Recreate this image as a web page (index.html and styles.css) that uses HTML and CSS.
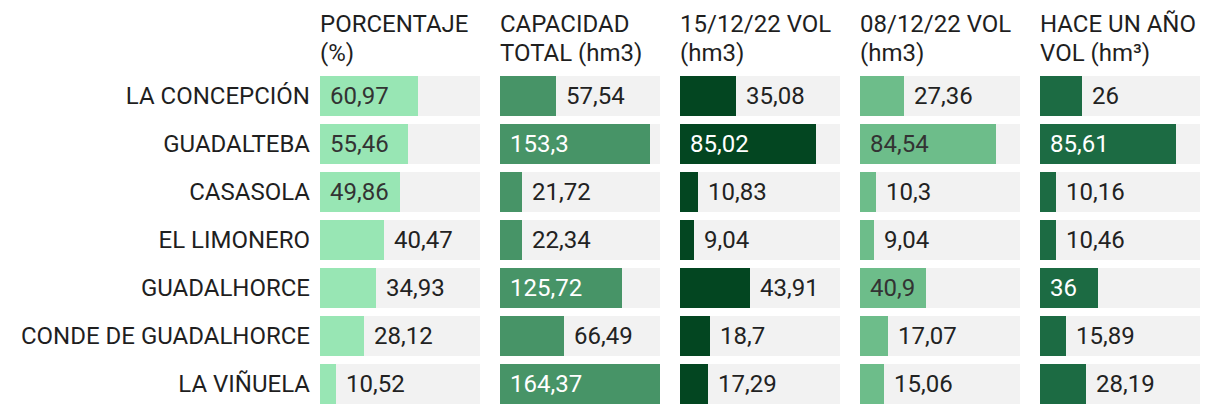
FILE: index.html
```html
<!DOCTYPE html>
<html lang="es">
<head>
<meta charset="utf-8">
<title>Embalses</title>
<link rel="stylesheet" href="styles.css">
</head>
<body>
<div class="table">
  <div class="head"></div>
  <div class="head">PORCENTAJE<br>(%)</div>
  <div class="head">CAPACIDAD<br>TOTAL (hm3)</div>
  <div class="head">15/12/22 VOL<br>(hm3)</div>
  <div class="head">08/12/22 VOL<br>(hm3)</div>
  <div class="head">HACE UN AÑO<br>VOL (hm³)</div>

  <div class="label">LA CONCEPCIÓN</div>
  <div class="cell c1"><div class="bar" style="width:98px"><span class="val">60,97</span></div></div>
  <div class="cell c2"><div class="bar" style="width:56px"></div><span class="val">57,54</span></div>
  <div class="cell c3"><div class="bar" style="width:56px"></div><span class="val">35,08</span></div>
  <div class="cell c4"><div class="bar" style="width:44px"></div><span class="val">27,36</span></div>
  <div class="cell c5"><div class="bar" style="width:42px"></div><span class="val">26</span></div>

  <div class="label">GUADALTEBA</div>
  <div class="cell c1"><div class="bar" style="width:88px"><span class="val">55,46</span></div></div>
  <div class="cell c2"><div class="bar" style="width:150px"><span class="val">153,3</span></div></div>
  <div class="cell c3"><div class="bar" style="width:136px"><span class="val">85,02</span></div></div>
  <div class="cell c4"><div class="bar" style="width:136px"><span class="val">84,54</span></div></div>
  <div class="cell c5"><div class="bar" style="width:136px"><span class="val">85,61</span></div></div>

  <div class="label">CASASOLA</div>
  <div class="cell c1"><div class="bar" style="width:80px"><span class="val">49,86</span></div></div>
  <div class="cell c2"><div class="bar" style="width:22px"></div><span class="val">21,72</span></div>
  <div class="cell c3"><div class="bar" style="width:18px"></div><span class="val">10,83</span></div>
  <div class="cell c4"><div class="bar" style="width:16px"></div><span class="val">10,3</span></div>
  <div class="cell c5"><div class="bar" style="width:16px"></div><span class="val">10,16</span></div>

  <div class="label">EL LIMONERO</div>
  <div class="cell c1"><div class="bar" style="width:64px"></div><span class="val">40,47</span></div>
  <div class="cell c2"><div class="bar" style="width:22px"></div><span class="val">22,34</span></div>
  <div class="cell c3"><div class="bar" style="width:14px"></div><span class="val">9,04</span></div>
  <div class="cell c4"><div class="bar" style="width:14px"></div><span class="val">9,04</span></div>
  <div class="cell c5"><div class="bar" style="width:16px"></div><span class="val">10,46</span></div>

  <div class="label">GUADALHORCE</div>
  <div class="cell c1"><div class="bar" style="width:56px"></div><span class="val">34,93</span></div>
  <div class="cell c2"><div class="bar" style="width:122px"><span class="val">125,72</span></div></div>
  <div class="cell c3"><div class="bar" style="width:70px"></div><span class="val">43,91</span></div>
  <div class="cell c4"><div class="bar" style="width:66px"><span class="val">40,9</span></div></div>
  <div class="cell c5"><div class="bar" style="width:58px"><span class="val">36</span></div></div>

  <div class="label">CONDE DE GUADALHORCE</div>
  <div class="cell c1"><div class="bar" style="width:44px"></div><span class="val">28,12</span></div>
  <div class="cell c2"><div class="bar" style="width:64px"></div><span class="val">66,49</span></div>
  <div class="cell c3"><div class="bar" style="width:30px"></div><span class="val">18,7</span></div>
  <div class="cell c4"><div class="bar" style="width:28px"></div><span class="val">17,07</span></div>
  <div class="cell c5"><div class="bar" style="width:26px"></div><span class="val">15,89</span></div>

  <div class="label">LA VIÑUELA</div>
  <div class="cell c1"><div class="bar" style="width:16px"></div><span class="val">10,52</span></div>
  <div class="cell c2"><div class="bar" style="width:160px"><span class="val">164,37</span></div></div>
  <div class="cell c3"><div class="bar" style="width:28px"></div><span class="val">17,29</span></div>
  <div class="cell c4"><div class="bar" style="width:24px"></div><span class="val">15,06</span></div>
  <div class="cell c5"><div class="bar" style="width:46px"></div><span class="val">28,19</span></div>
</div>
</body>
</html>
```
FILE: styles.css
```css
html, body {
  margin: 0;
  padding: 0;
  background: #ffffff;
}
body {
  font-family: Roboto, "Liberation Sans", Arial, sans-serif;
  font-size: 24px;
  color: #222222;
}
.table {
  display: grid;
  grid-template-columns: 300px repeat(5, 160px);
  column-gap: 20px;
  row-gap: 8px;
  padding-top: 10px;
}
.head {
  line-height: 29px;
  height: 58px;
  white-space: nowrap;
  color: #1f1f1f;
}
.label {
  text-align: right;
  margin-right: -10px;
  height: 40px;
  line-height: 40px;
  white-space: nowrap;
  color: #1f1f1f;
}
.cell {
  height: 40px;
  background: #f2f2f2;
  display: flex;
  align-items: center;
  line-height: 40px;
  white-space: nowrap;
}
.bar {
  height: 40px;
  flex: none;
  display: flex;
  align-items: center;
}
.val {
  padding-left: 10px;
  color: #222222;
}
.c1 .bar { background: #98e6b4; }
.c2 .bar { background: #479467; }
.c3 .bar { background: #034621; }
.c4 .bar { background: #6dbd8a; }
.c5 .bar { background: #1c6b43; }
.c1 .bar .val, .c4 .bar .val { color: #333333; }
.c2 .bar .val, .c3 .bar .val, .c5 .bar .val { color: #ffffff; }
```
